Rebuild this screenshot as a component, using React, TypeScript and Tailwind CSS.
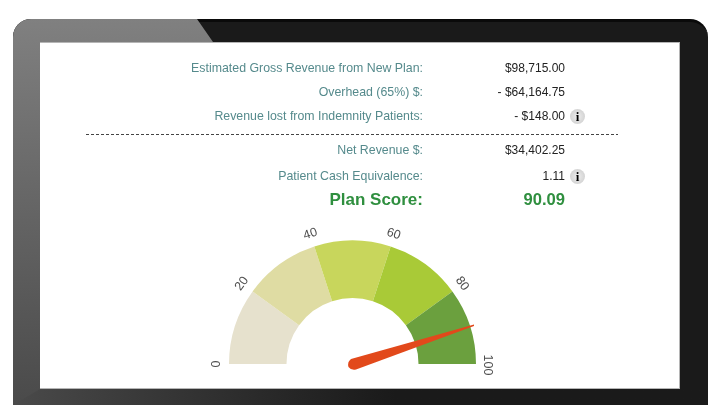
import React from 'react';

const SANS = { fontFamily: '"Liberation Sans", Arial, sans-serif' };

const CX = 352.5;
const CY = 364;
const R_OUT = 123.5;
const R_IN = 66;

const BANDS = [
  { from: 0, to: 20, color: '#e6e1cd' },
  { from: 20, to: 40, color: '#dfdca3' },
  { from: 40, to: 60, color: '#c8d65c' },
  { from: 60, to: 80, color: '#a9ca37' },
  { from: 80, to: 100, color: '#6ba03e' },
];

const point = (value: number, r: number) => {
  const a = Math.PI * (1 - value / 100);
  return `${(CX + r * Math.cos(a)).toFixed(2)} ${(CY - r * Math.sin(a)).toFixed(2)}`;
};

const bandPath = (from: number, to: number) =>
  `M${point(from, R_IN)} L${point(from, R_OUT)} A${R_OUT} ${R_OUT} 0 0 1 ${point(to, R_OUT)} L${point(to, R_IN)} A${R_IN} ${R_IN} 0 0 0 ${point(from, R_IN)}Z`;

const InfoIcon = () => (
  <span className="ml-[5px] flex h-[15px] w-[15px] items-center justify-center rounded-full bg-[radial-gradient(circle,#eee,#c9c9c9)] text-[13px] font-bold leading-none text-black" style={{ fontFamily: '"Liberation Serif", serif' }}>
    i
  </span>
);

const Row = ({ label, value, info }: { label: string; value: string; info?: boolean }) => (
  <div className="flex h-6 items-center">
    <div className="w-[383px] text-right text-[12.35px] text-[#558a8c]">{label}</div>
    <div className="w-[142px] text-right text-[12px] text-[#222]">{value}</div>
    {info && <InfoIcon />}
  </div>
);

const Gauge = () => (
  <svg className="absolute left-[-40px] top-[-43px]" width={720} height={405} viewBox="0 0 720 405">
    {BANDS.map(b => (
      <path key={b.from} d={bandPath(b.from, b.to)} fill={b.color} />
    ))}
    <g fill="#4d4d4d" fontSize="12.5" style={SANS} textAnchor="middle">
      <text transform="translate(215 364) rotate(-90)" dy="4.5">0</text>
      <text transform="translate(241 283) rotate(-54)" dy="4.5">20</text>
      <text transform="translate(310 233) rotate(-18)" dy="4.5">40</text>
      <text transform="translate(394 233) rotate(18)" dy="4.5">60</text>
      <text transform="translate(463 283) rotate(54)" dy="4.5">80</text>
      <text transform="translate(488 365) rotate(90)" dy="4.5">100</text>
    </g>
    <path d="M474 324.5 L474 326 L356 369.5 Q351 370.5 348.5 367 Q347 362 351 359Z" fill="#e2491b" />
  </svg>
);

export default function App() {
  return (
    <div className="flex h-[405px] w-[720px] flex-col overflow-hidden bg-white pl-[13px] pr-[12px] pt-[19px]" style={SANS}>
      <div className="relative flex-1 rounded-t-[18px] border-t-[3px] border-[#0a0a0a] bg-[#1a1a1a] pl-[27px] pr-[28px] pt-[20px]">
        <div className="absolute inset-x-0 bottom-0 h-[16px] bg-gradient-to-r from-[#4a4a4a] to-[#1a1a1a] to-55%" />
        <div className="absolute -top-[3px] bottom-0 left-0 w-[200px] rounded-tl-[18px] bg-gradient-to-b from-[#808080] to-[#4a4a4a] [clip-path:polygon(0_0,184px_0,200px_23px,27px_23px,27px_370px,0_386px)]" />
        <div className="relative h-[347px] border-y border-r border-[#b5b5b5] bg-white pt-[13px] blur-[0.5px]">
          <Row label="Estimated Gross Revenue from New Plan:" value="$98,715.00" />
          <Row label="Overhead (65%) $:" value="- $64,164.75" />
          <Row label="Revenue lost from Indemnity Patients:" value="- $148.00" info />
          <div className="ml-[46px] mt-[6px] h-px w-[532px] bg-[repeating-linear-gradient(90deg,#444_0_3px,transparent_3px_5px)]" />
          <div className="mt-[3px]">
            <Row label="Net Revenue $:" value="$34,402.25" />
          </div>
          <div className="mt-[2px]">
            <Row label="Patient Cash Equivalence:" value="1.11" info />
          </div>
          <div className="flex h-6 items-center font-bold text-[#2f8f3f]">
            <div className="w-[383px] text-right text-[17px]">Plan Score:</div>
            <div className="w-[142px] text-right text-[16.6px]">90.09</div>
          </div>
          <Gauge />
        </div>
      </div>
    </div>
  );
}
